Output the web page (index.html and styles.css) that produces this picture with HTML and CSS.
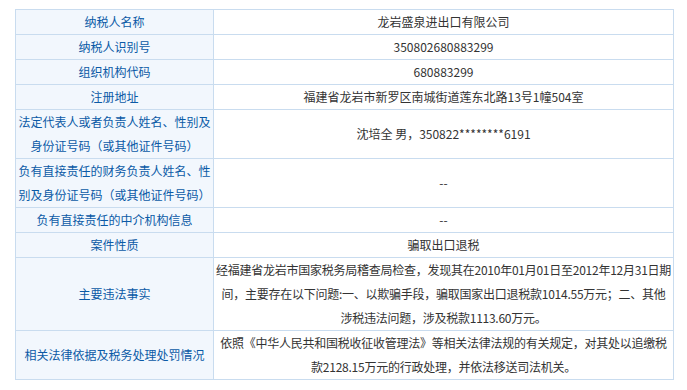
FILE: index.html
```html
<!DOCTYPE html>
<html lang="zh-CN">
<head>
<meta charset="utf-8">
<title>案件信息</title>
<link rel="stylesheet" href="styles.css">
</head>
<body>
<table class="info">
  <colgroup><col class="c-label"><col class="c-value"></colgroup>
  <tr><th>纳税人名称</th><td>龙岩盛泉进出口有限公司</td></tr>
  <tr><th>纳税人识别号</th><td>350802680883299</td></tr>
  <tr><th>组织机构代码</th><td>680883299</td></tr>
  <tr><th>注册地址</th><td>福建省龙岩市新罗区南城街道莲东北路13号1幢504室</td></tr>
  <tr><th>法定代表人或者负责人姓名、性别及身份证号码（或其他证件号码）</th><td>沈培全 男，350822********6191</td></tr>
  <tr><th>负有直接责任的财务负责人姓名、性别及身份证号码（或其他证件号码）</th><td>--</td></tr>
  <tr><th>负有直接责任的中介机构信息</th><td>--</td></tr>
  <tr><th>案件性质</th><td>骗取出口退税</td></tr>
  <tr><th>主要违法事实</th><td><span class="ln">经福建省龙岩市国家税务局稽查局检查，发现其在2010年01月01日至2012年12月31日期</span><br><span class="ln">间，主要存在以下问题:一、以欺骗手段，骗取国家出口退税款1014.55万元；二、其他</span><br><span class="ln">涉税违法问题，涉及税款1113.60万元。</span></td></tr>
  <tr><th>相关法律依据及税务处理处罚情况</th><td><span class="ln">依照《中华人民共和国税收征收管理法》等相关法律法规的有关规定，对其处以追缴税</span><br><span class="ln">款2128.15万元的行政处理，并依法移送司法机关。</span></td></tr>
</table>
</body>
</html>
```

FILE: styles.css
```css
html, body {
  margin: 0;
  padding: 0;
  background: #ffffff;
}
body {
  font-family: "Noto Sans CJK SC", "Noto Sans", sans-serif;
  font-size: 12px;
}
.info {
  margin: 9px 0 0 15px;
  width: 659px;
  border-collapse: collapse;
  table-layout: fixed;
  border: 1px solid #c9dcef;
}
.c-label { width: 198px; }
.info th,
.info td {
  border: 1px solid #c9dcef;
  padding: 0 2px;
  line-height: 24px;
  text-align: center;
  vertical-align: middle;
  font-weight: normal;
}
.info th {
  background: #f2f7fd;
  color: #0b5aa6;
}
.info td {
  color: #333333;
  background: #ffffff;
}
.ln {
  white-space: nowrap;
  letter-spacing: -0.25px;
}
```
